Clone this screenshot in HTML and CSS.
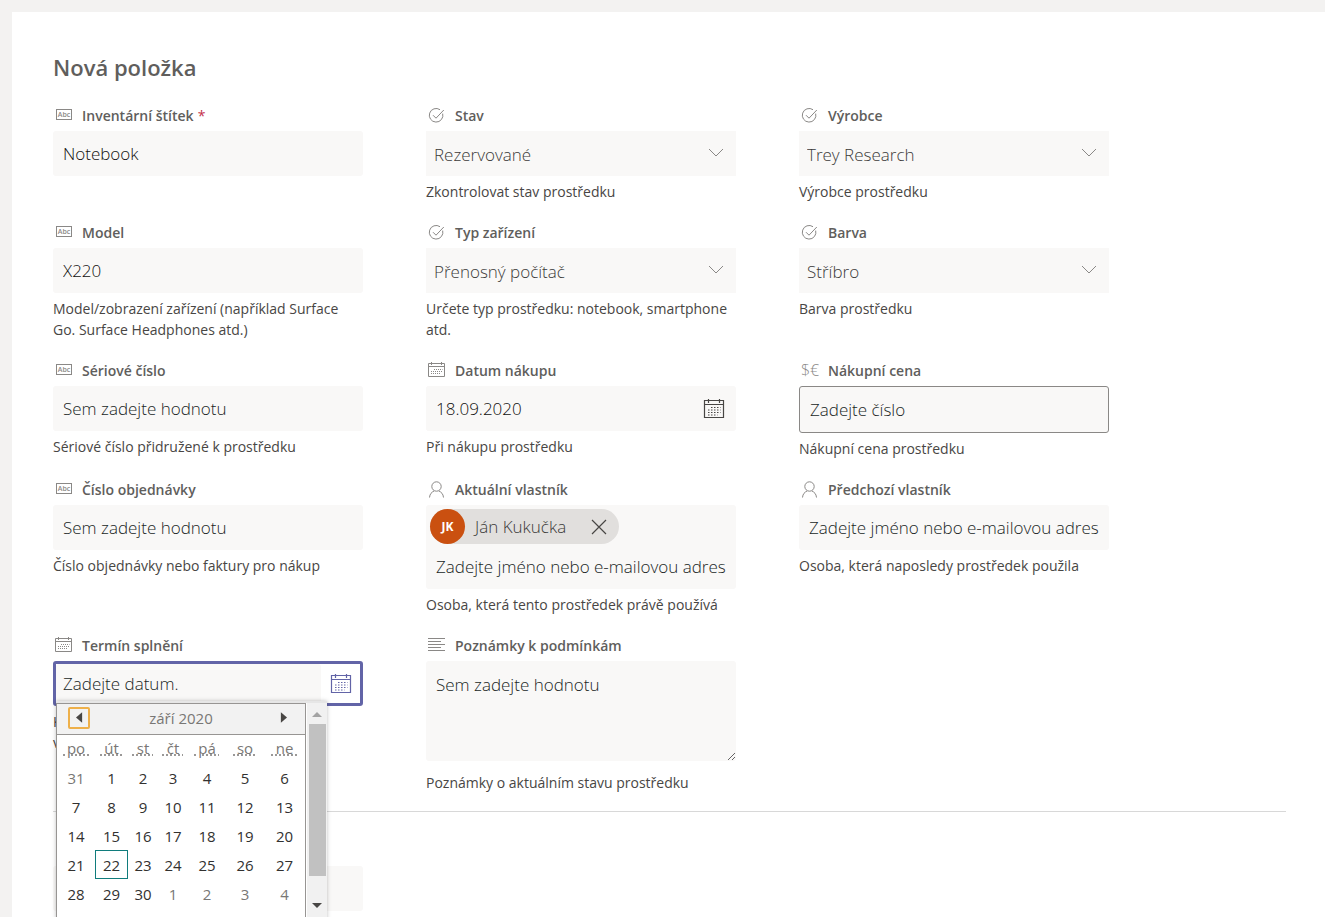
FILE: index.html
```html
<!DOCTYPE html>
<html lang="cs">
<head>
    <meta charset="UTF-8">
    <meta name="viewport" content="width=device-width, initial-scale=1.0">
    <title>Nová položka</title>
    <link rel="stylesheet" href="styles.css">
</head>
<body>
    <svg class="symbols" aria-hidden="true">
        <symbol id="icon-text" viewBox="0 0 18 18">
            <rect x="1.5" y="2.5" width="15" height="10" fill="none" stroke="currentColor"/>
            <text x="9" y="10" text-anchor="middle" font-size="7" font-weight="600" fill="currentColor">Abc</text>
        </symbol>
        <symbol id="icon-choice" viewBox="0 0 18 18">
            <path d="M14.700 6.600A6.800 6.800 0 1 1 12 2.700M5 8.200l3 3L15.800 3" fill="none" stroke="currentColor"/>
        </symbol>
        <symbol id="icon-date" viewBox="0 0 18 18">
            <path d="M.5 1.500h16v13h-16zM.5 4.500h16M3.500 0v3M13.500 0v3" fill="none" stroke="currentColor"/>
            <path d="M6 7.500h8.500M3 9.500h11.500M3 11.500h9.500" fill="none" stroke="currentColor" stroke-dasharray="1 1"/>
        </symbol>
        <symbol id="icon-date-big" viewBox="0 0 22 22">
            <path d="M1.500 2.500h19v17h-19zM1.500 6.500h19M5.500 1v4M16.500 1v4" fill="none" stroke="currentColor" stroke-width="1.200"/>
            <path d="M8 9.500h9.500M5 12h12.500M5 14.500h12.500M5 17h9.500" fill="none" stroke="currentColor" stroke-dasharray="1.500 1.500"/>
        </symbol>
        <symbol id="icon-money" viewBox="0 0 18 18">
            <text x="9" y="14" text-anchor="middle" font-size="16" font-weight="300" fill="currentColor">$€</text>
        </symbol>
        <symbol id="icon-person" viewBox="0 0 18 18">
            <circle cx="8.500" cy="5.500" r="4.700" fill="none" stroke="currentColor"/>
            <path d="M1.500 16.500c.3-3.600 2.200-5.400 4.600-6.500M15.500 16.500c-.3-3.600-2.200-5.400-4.600-6.500" fill="none" stroke="currentColor"/>
        </symbol>
        <symbol id="icon-lines" viewBox="0 0 18 18">
            <path d="M0 1.500h17M0 4.500h13M0 7.500h17M0 10.500h13M0 13.500h17" fill="none" stroke="currentColor"/>
        </symbol>
        <symbol id="icon-chevron" viewBox="0 0 16 10">
            <path d="M1 1l7 7 7-7" fill="none" stroke="currentColor"/>
        </symbol>
        <symbol id="icon-close" viewBox="0 0 16 16">
            <path d="M1 1l14 14M15 1L1 15" fill="none" stroke="currentColor" stroke-width="1.200"/>
        </symbol>
    </svg>

    <main class="page">
        <h1>Nová položka</h1>
        <form id="item-form">
            <div class="fields">
                <div class="field">
                    <label for="asset_tag"><svg><use href="#icon-text"/></svg>Inventární štítek <span class="required">*</span></label>
                    <input class="box" type="text" id="asset_tag" value="Notebook" required>
                </div>
                <div class="field">
                    <label for="status"><svg><use href="#icon-choice"/></svg>Stav</label>
                    <div class="select">
                        <select class="box" id="status"><option>Rezervované</option></select>
                        <svg><use href="#icon-chevron"/></svg>
                    </div>
                    <p class="help">Zkontrolovat stav prostředku</p>
                </div>
                <div class="field">
                    <label for="manufacturer"><svg><use href="#icon-choice"/></svg>Výrobce</label>
                    <div class="select">
                        <select class="box" id="manufacturer"><option>Trey Research</option></select>
                        <svg><use href="#icon-chevron"/></svg>
                    </div>
                    <p class="help">Výrobce prostředku</p>
                </div>

                <div class="field">
                    <label for="model"><svg><use href="#icon-text"/></svg>Model</label>
                    <input class="box" type="text" id="model" value="X220">
                    <p class="help">Model/zobrazení zařízení (například Surface Go. Surface Headphones atd.)</p>
                </div>
                <div class="field">
                    <label for="asset_type"><svg><use href="#icon-choice"/></svg>Typ zařízení</label>
                    <div class="select">
                        <select class="box" id="asset_type"><option>Přenosný počítač</option></select>
                        <svg><use href="#icon-chevron"/></svg>
                    </div>
                    <p class="help">Určete typ prostředku: notebook, smartphone atd.</p>
                </div>
                <div class="field">
                    <label for="color"><svg><use href="#icon-choice"/></svg>Barva</label>
                    <div class="select">
                        <select class="box" id="color"><option>Stříbro</option></select>
                        <svg><use href="#icon-chevron"/></svg>
                    </div>
                    <p class="help">Barva prostředku</p>
                </div>

                <div class="field">
                    <label for="serial"><svg><use href="#icon-text"/></svg>Sériové číslo</label>
                    <input class="box" type="text" id="serial" placeholder="Sem zadejte hodnotu">
                    <p class="help">Sériové číslo přidružené k prostředku</p>
                </div>
                <div class="field">
                    <label for="purchase_date"><svg><use href="#icon-date"/></svg>Datum nákupu</label>
                    <div class="date">
                        <input class="box" type="text" id="purchase_date" value="18.09.2020">
                        <button type="button" aria-label="Vybrat datum nákupu"><svg><use href="#icon-date-big"/></svg></button>
                    </div>
                    <p class="help">Při nákupu prostředku</p>
                </div>
                <div class="field">
                    <label for="price"><svg><use href="#icon-money"/></svg>Nákupní cena</label>
                    <input class="box outlined" type="text" id="price" placeholder="Zadejte číslo">
                    <p class="help">Nákupní cena prostředku</p>
                </div>

                <div class="field">
                    <label for="order_number"><svg><use href="#icon-text"/></svg>Číslo objednávky</label>
                    <input class="box" type="text" id="order_number" placeholder="Sem zadejte hodnotu">
                    <p class="help">Číslo objednávky nebo faktury pro nákup</p>
                </div>
                <div class="field">
                    <label for="owner"><svg><use href="#icon-person"/></svg>Aktuální vlastník</label>
                    <div class="people">
                        <div class="chip">
                            <span class="avatar">JK</span>
                            <span class="name">Ján Kukučka</span>
                            <button type="button" aria-label="Odebrat"><svg><use href="#icon-close"/></svg></button>
                        </div>
                        <input class="box" type="text" id="owner" placeholder="Zadejte jméno nebo e-mailovou adresu">
                    </div>
                    <p class="help">Osoba, která tento prostředek právě používá</p>
                </div>
                <div class="field">
                    <label for="prev_owner"><svg><use href="#icon-person"/></svg>Předchozí vlastník</label>
                    <input class="box" type="text" id="prev_owner" placeholder="Zadejte jméno nebo e-mailovou adresu">
                    <p class="help">Osoba, která naposledy prostředek použila</p>
                </div>

                <div class="field">
                    <label for="due_date"><svg><use href="#icon-date"/></svg>Termín splnění</label>
                    <div class="date active">
                        <input class="box" type="text" id="due_date" placeholder="Zadejte datum.">
                        <button type="button" aria-label="Vybrat termín splnění"><svg><use href="#icon-date-big"/></svg></button>
                        <div class="picker">
                            <div class="calendar">
                                <div class="month">
                                    <button type="button" class="prev" aria-label="Předchozí měsíc"><svg viewBox="0 0 8 12"><path d="M7 0v12L0 6z"/></svg></button>
                                    <span>září 2020</span>
                                    <button type="button" class="next" aria-label="Další měsíc"><svg viewBox="0 0 8 12"><path d="M1 0v12l7-6z"/></svg></button>
                                </div>
                                <table>
                                    <thead>
                                        <tr>
                                            <th class="wide"><abbr>&nbsp;po&nbsp;</abbr></th>
                                            <th class="mid"><abbr>&nbsp;út&nbsp;</abbr></th>
                                            <th><abbr>&nbsp;st&nbsp;</abbr></th>
                                            <th><abbr>&nbsp;čt&nbsp;</abbr></th>
                                            <th class="wide"><abbr>&nbsp;pá&nbsp;</abbr></th>
                                            <th class="wide"><abbr>&nbsp;so&nbsp;</abbr></th>
                                            <th class="last"><abbr>&nbsp;ne&nbsp;</abbr></th>
                                        </tr>
                                    </thead>
                                    <tbody>
                                        <tr><td class="other">31</td><td>1</td><td>2</td><td>3</td><td>4</td><td>5</td><td>6</td></tr>
                                        <tr><td>7</td><td>8</td><td>9</td><td>10</td><td>11</td><td>12</td><td>13</td></tr>
                                        <tr><td>14</td><td>15</td><td>16</td><td>17</td><td>18</td><td>19</td><td>20</td></tr>
                                        <tr><td>21</td><td class="today">22</td><td>23</td><td>24</td><td>25</td><td>26</td><td>27</td></tr>
                                        <tr><td>28</td><td>29</td><td>30</td><td class="other">1</td><td class="other">2</td><td class="other">3</td><td class="other">4</td></tr>
                                    </tbody>
                                </table>
                            </div>
                            <div class="scrollbar">
                                <svg class="up" viewBox="0 0 10 5"><path d="M0 5l5-5 5 5z"/></svg>
                                <div class="thumb"></div>
                                <svg viewBox="0 0 10 5"><path d="M0 0l5 5 5-5z"/></svg>
                            </div>
                        </div>
                    </div>
                    <p class="help">K<br>v</p>
                </div>
                <div class="field">
                    <label for="notes"><svg><use href="#icon-lines"/></svg>Poznámky k podmínkám</label>
                    <div class="notes">
                        <textarea class="box" id="notes" placeholder="Sem zadejte hodnotu"></textarea>
                    </div>
                    <p class="help">Poznámky o aktuálním stavu prostředku</p>
                </div>
            </div>

            <div class="fields extra">
                <input class="box" type="text" aria-label="Přílohy">
            </div>
        </form>
    </main>
</body>
</html>
```
FILE: styles.css
```css
* { box-sizing: border-box; }
body { margin: 0; background-color: #f3f2f1; color: #484644; font-family: "Segoe UI", "Open Sans", "Noto Sans", sans-serif; font-size: 14px; }
.symbols { display: none; }
.page { margin: 12px 0 0 12px; padding: 40px 39px 0 41px; height: calc(100vh - 12px); overflow: hidden; background-color: #fff; }
h1 { margin: 0 0 23px; font-size: 22px; line-height: 30px; font-weight: 600; color: #605e5c; }

.fields { display: grid; grid-template-columns: repeat(3, minmax(0, 310px)); column-gap: 63px; row-gap: 20px; }
.extra { margin-top: 18px; padding-top: 54px; border-top: 1px solid #d8d8d8; }
label { display: flex; align-items: center; gap: 9px; height: 26px; padding: 0 0 5px 2px; font-weight: 600; color: #605e5c; }
label svg { width: 18px; height: 18px; color: #8a8886; }
.required { margin-left: -5px; color: #c4314b; font-weight: 400; }
.help { margin: 5px 0 0; line-height: 21px; }

.box { display: block; width: 100%; height: 45px; padding: 0 10px; border: none; border-radius: 3px; background-color: #f9f8f7; color: #11100f; font-family: inherit; font-size: 17px; font-weight: 300; outline: none; }
.box::placeholder { color: #201f1e; opacity: 1; }
.outlined { height: 47px; border: 1px solid #8a8886; }

.select { position: relative; }
.select select { appearance: none; padding: 2px 8px 0; border-radius: 0; color: #3b3a39; }
.select svg { position: absolute; top: 17px; right: 12px; width: 16px; height: 10px; color: #8a8886; pointer-events: none; }

button { padding: 0; border: none; background: none; color: #484644; cursor: pointer; }
.date { position: relative; display: flex; height: 45px; background-color: #f9f8f7; border-radius: 3px; }
.date > button { flex: none; width: 45px; }
.date > button svg { display: block; width: 22px; height: 22px; margin: 0 auto; }
.date.active { border: 3px solid #6264a7; background-color: #fff; }
.active .box { height: 39px; padding: 0 7px; }
.active > button { width: 39px; color: #6264a7; }

.people { height: 84px; padding-top: 4px; background-color: #f9f8f7; border-radius: 3px; }
.people .box { height: 44px; }
.chip { display: inline-flex; align-items: center; height: 35px; margin-left: 4px; padding-right: 12px; border-radius: 18px; background-color: #e1dfdd; vertical-align: top; }
.chip svg { display: block; width: 16px; height: 16px; }
.avatar { width: 35px; border-radius: 50%; background-color: #ca5010; color: #fff; font-size: 12px; font-weight: 700; line-height: 35px; text-align: center; }
.name { margin: 0 25px 0 10px; color: #3b3a39; font-size: 17px; font-weight: 300; }

.notes { padding-bottom: 6px; }
textarea.box { height: 100px; padding: 12px 10px; resize: vertical; }

.picker { position: absolute; z-index: 1; top: 37px; left: 0; display: flex; width: 271px; height: 240px; border-top: 2px solid #e6e6e6; background-color: #fff; box-shadow: 0 0 4px rgba(0, 0, 0, 0.25); }
.calendar { width: 250px; border: 1px solid #979593; font-size: 15px; color: #323130; }
.month { display: flex; align-items: center; justify-content: space-between; height: 31px; padding: 0 11px 3px; border-bottom: 1px solid #979593; background-color: #f2f2f2; color: #797775; }
.month button { width: 22px; height: 22px; border-radius: 2px; }
.month svg { display: block; width: 7px; height: 11px; margin: 0 auto; fill: #484644; }
.month .prev { border: 2px solid #eeb04a; }
table { width: 100%; border-collapse: collapse; table-layout: fixed; }
th, td { height: 29px; padding: 0; font-weight: 400; text-align: center; }
th { width: 30px; height: 28px; padding-bottom: 2px; color: #797775; }
.mid { width: 33px; }
.wide { width: 38px; }
.last { width: auto; }
abbr { text-decoration: underline dotted; }
.other { color: #797775; }
.today { outline: 1px solid #107c7c; outline-offset: -1px; }
.scrollbar { display: flex; flex-direction: column; align-items: center; flex: 1; margin-left: 1px; padding: 9px 0 33px; background-color: #f1f1f1; }
.scrollbar svg { width: 10px; height: 5px; fill: #484644; }
.scrollbar .up { fill: #a3a3a3; }
.thumb { width: 17px; height: 152px; margin: 7px 0 27px; background-color: #c1c1c1; }
```
